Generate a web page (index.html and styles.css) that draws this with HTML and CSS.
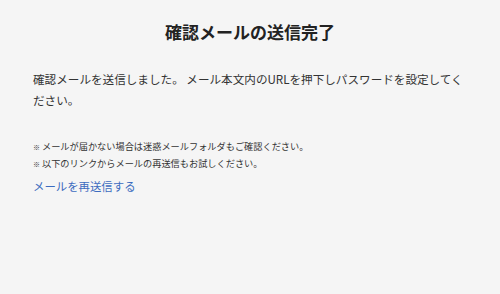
FILE: index.html
```html
<!DOCTYPE html>
<html lang="ja">
<head>
    <meta charset="UTF-8">
    <title>確認メールの送信完了</title>
    <link rel="stylesheet" href="styles.css">
</head>
<body>

<div class="page">
    <h1 class="title">確認メールの送信完了</h1>
    <p class="message">確認メールを送信しました。 メール本文内のURLを押下しパスワードを設定してください。</p>
    <ul class="notes">
        <li>メールが届かない場合は迷惑メールフォルダもご確認ください。</li>
        <li>以下のリンクからメールの再送信もお試しください。</li>
    </ul>
    <a class="resend" href="#">メールを再送信する</a>
</div>

</body>
</html>
```

FILE: styles.css
```css
html, body {
    margin: 0;
    height: 100%;
}
body {
    font-family: "Noto Sans CJK JP", "Noto Sans", sans-serif;
    background: #f5f5f5;
    color: #333;
}
.page {
    padding: 21px 33px 0;
}
.title {
    margin: 0;
    text-align: center;
    font-size: 17px;
    line-height: 22px;
    font-weight: bold;
    color: #222;
}
.message {
    margin: 26px 0 0;
    font-size: 11.6px;
    line-height: 21px;
}
.notes {
    list-style: none;
    padding: 0;
    margin: 27px 0 0;
    font-size: 9.2px;
    line-height: 16px;
}
.notes li::before {
    content: "※";
    font-size: 7px;
    margin-right: 2px;
}
.resend {
    display: inline-block;
    margin-top: 5px;
    font-size: 11.4px;
    line-height: 16px;
    color: #3d6cc0;
    text-decoration: none;
}
```
